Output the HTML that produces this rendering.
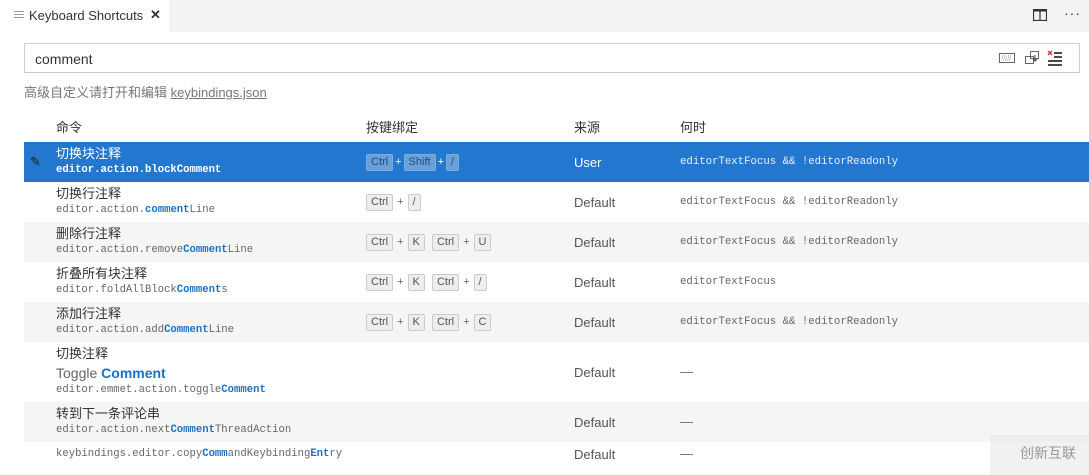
<!DOCTYPE html>
<html><head><meta charset="utf-8"><style>
*{margin:0;padding:0;box-sizing:border-box}
body{width:1089px;height:475px;overflow:hidden;background:#fff;font-family:"Liberation Sans","Noto Sans CJK SC",sans-serif;font-size:13px;color:#616161;position:relative;line-height:1.2}
.bar{position:absolute;left:0;top:0;width:1089px;height:32px;background:#f3f3f3}
.tab{position:absolute;left:0;top:0;width:169px;height:32px;background:#fff;color:#333;font-size:13px}
.abs{position:absolute;white-space:nowrap}
.search{position:absolute;left:24px;top:43px;width:1056px;height:30px;border:1px solid #cecece;background:#fff}
.row{position:absolute;left:24px;width:1065px;height:40px}
.g{background:#f5f5f5}
.sel{background:#2477ce;color:#fff}
.t{position:absolute;left:32px;top:4px;font-size:13px;line-height:15px;color:#333}
.id{position:absolute;left:32px;top:22px;font-family:"Liberation Mono",monospace;font-size:10.6px;line-height:13px;color:#666}
.id b{color:#1a73c4;font-weight:bold}
.k{position:absolute;left:342px;top:12px;font-size:11px;color:#666;display:flex;align-items:center;gap:2px}
.k span.c{display:inline-block;border:1px solid #ccc;background:#eee;border-radius:2px;padding:0 4px;height:17px;line-height:15px;color:#555}
.k span.p{margin:0 2px}
.src{position:absolute;left:550px;top:13px;font-size:13px;color:#555}
.w{position:absolute;left:656px;top:14px;font-family:"Liberation Mono",monospace;font-size:10.7px;color:#666}
.sel .t,.sel .id,.sel .src{color:#fff}
.sel .w{color:#e8f0fb}
.sel .k span.c{background:#6a9fd8;border-color:#7aaee0;color:#1f4f85}
.sel .k{color:#fff}
</style></head><body>
<div class="bar"></div>
<div class="tab">
 <div class="abs" style="left:14px;top:11px;width:10px;height:1px;background:#999;box-shadow:0 3px 0 #999,0 6px 0 #999"></div>
 <div class="abs" style="left:29px;top:8px">Keyboard Shortcuts</div>
 <div class="abs" style="left:150px;top:7px;font-size:13px;font-weight:bold">✕</div>
</div>
<svg class="abs" style="left:1033px;top:9px" width="14" height="12"><rect x="0.5" y="0.5" width="13" height="11" fill="none" stroke="#333" stroke-width="1.2"/><line x1="7" y1="0" x2="7" y2="12" stroke="#333" stroke-width="1.2"/><line x1="0" y1="1.5" x2="14" y2="1.5" stroke="#333" stroke-width="2"/></svg>
<div class="abs" style="left:1064px;top:5px;font-size:14px;color:#333;letter-spacing:1px">···</div>
<div class="search">
 <div class="abs" style="left:10px;top:7px;font-size:14px;color:#333">comment</div>
 <svg class="abs" style="left:974px;top:9px" width="16" height="10"><rect x="0.5" y="0.5" width="15" height="9" fill="none" stroke="#666"/><path d="M3 3h10M3 5h10M4 7h8" stroke="#999" stroke-dasharray="1 1"/></svg>
 <svg class="abs" style="left:1000px;top:7px" width="14" height="14"><rect x="0.5" y="5.5" width="8" height="7" fill="none" stroke="#666"/><rect x="5.5" y="0.5" width="8" height="7" fill="none" stroke="#666"/><path d="M10 4v6M8 8l2 2 2-2" stroke="#444" fill="none"/></svg>
 <svg class="abs" style="left:1022px;top:6px" width="16" height="16"><path d="M1 1l4 4M5 1l-4 4" stroke="#c33" stroke-width="1.3"/><path d="M7 3h8M7 7h8M1 11h14M1 15h14" stroke="#333" stroke-width="1.8"/></svg>
</div>
<div class="abs" style="left:24px;top:85px;font-size:13px;color:#777">高级自定义请打开和编辑 <span style="text-decoration:underline">keybindings.json</span></div>
<div class="abs" style="left:56px;top:120px;color:#333">命令</div>
<div class="abs" style="left:366px;top:120px;color:#333">按键绑定</div>
<div class="abs" style="left:574px;top:120px;color:#333">来源</div>
<div class="abs" style="left:680px;top:120px;color:#333">何时</div>

<div class="row sel" style="top:142px">
 <div class="abs" style="left:6px;top:12px;font-size:13px;color:#222">✎</div>
 <div class="t">切换块注释</div><div class="id" style="font-weight:bold">editor.action.blockComment</div>
 <div class="k"><span class="c">Ctrl</span>+<span class="c">Shift</span>+<span class="c">/</span></div>
 <div class="src">User</div><div class="w">editorTextFocus &amp;&amp; !editorReadonly</div>
</div>
<div class="row" style="top:182px">
 <div class="t">切换行注释</div><div class="id">editor.action.<b>comment</b>Line</div>
 <div class="k"><span class="c">Ctrl</span><span class="p">+</span><span class="c">/</span></div>
 <div class="src">Default</div><div class="w">editorTextFocus &amp;&amp; !editorReadonly</div>
</div>
<div class="row g" style="top:222px">
 <div class="t">删除行注释</div><div class="id">editor.action.remove<b>Comment</b>Line</div>
 <div class="k"><span class="c">Ctrl</span><span class="p">+</span><span class="c">K</span>&nbsp;<span class="c">Ctrl</span><span class="p">+</span><span class="c">U</span></div>
 <div class="src">Default</div><div class="w">editorTextFocus &amp;&amp; !editorReadonly</div>
</div>
<div class="row" style="top:262px">
 <div class="t">折叠所有块注释</div><div class="id">editor.foldAllBlock<b>Comment</b>s</div>
 <div class="k"><span class="c">Ctrl</span><span class="p">+</span><span class="c">K</span>&nbsp;<span class="c">Ctrl</span><span class="p">+</span><span class="c">/</span></div>
 <div class="src">Default</div><div class="w">editorTextFocus</div>
</div>
<div class="row g" style="top:302px">
 <div class="t">添加行注释</div><div class="id">editor.action.add<b>Comment</b>Line</div>
 <div class="k"><span class="c">Ctrl</span><span class="p">+</span><span class="c">K</span>&nbsp;<span class="c">Ctrl</span><span class="p">+</span><span class="c">C</span></div>
 <div class="src">Default</div><div class="w">editorTextFocus &amp;&amp; !editorReadonly</div>
</div>
<div class="row" style="top:342px;height:60px">
 <div class="t">切换注释</div>
 <div class="abs" style="left:32px;top:23px;font-size:14px;color:#666">Toggle <b style="color:#1a73c4">Comment</b></div>
 <div class="id" style="top:42px">editor.emmet.action.toggle<b>Comment</b></div>
 <div class="src" style="top:23px">Default</div><div class="w" style="top:22px;font-family:'Liberation Sans',sans-serif;font-size:13px">—</div>
</div>
<div class="row g" style="top:402px">
 <div class="t">转到下一条评论串</div><div class="id">editor.action.next<b>Comment</b>ThreadAction</div>
 <div class="src">Default</div><div class="w" style="top:12px;font-family:'Liberation Sans',sans-serif;font-size:13px">—</div>
</div>
<div class="row" style="top:442px;height:26px">
 <div class="id" style="top:6px">keybindings.editor.copy<b>Comm</b>andKeybinding<b>Ent</b>ry</div>
 <div class="src" style="top:5px">Default</div><div class="w" style="top:4px;font-family:'Liberation Sans',sans-serif;font-size:13px">—</div>
</div>
<div class="abs" style="left:990px;top:435px;width:99px;height:40px;background:rgba(235,235,235,0.7)"></div>
<div class="abs" style="left:1020px;top:445px;font-size:14px;color:#999">创新互联</div>
</body></html>
